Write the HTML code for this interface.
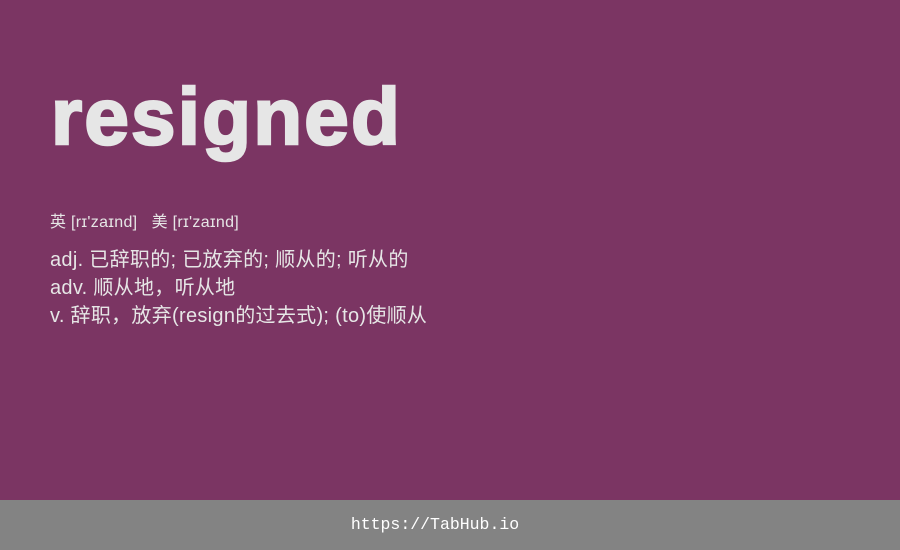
<!DOCTYPE html>
<html><head><meta charset="utf-8"><style>
body{margin:0;width:900px;height:550px;background:#7b3563;position:relative;overflow:hidden;font-family:"Liberation Sans","Noto Sans CJK SC",sans-serif;color:#e6e6e6}
.w{position:absolute;left:51px;top:67px;font-size:80px;font-weight:bold;letter-spacing:2.2px;line-height:100px;-webkit-text-stroke:2.5px #e6e6e6}
.p{position:absolute;left:50px;top:212px;font-size:16px;line-height:22px;letter-spacing:0.3px}
.d{position:absolute;left:50px;top:246px;font-size:20px;line-height:28px;letter-spacing:0.3px}
.f{position:absolute;left:0;top:500px;width:870px;height:50px;background:#838383;color:#fff;font-family:"Liberation Mono",monospace;font-size:16.5px;line-height:50px;text-align:center;padding-right:30px}
</style></head><body>
<div class="w">resigned</div>
<div class="p">英 [rɪ'zaɪnd]&nbsp;&nbsp;&nbsp;美 [rɪ'zaɪnd]</div>
<div class="d">adj. 已辞职的; 已放弃的; 顺从的; 听从的<br>adv. 顺从地，听从地<br>v. 辞职，放弃(resign的过去式); (to)使顺从</div>
<div class="f">https://TabHub.io</div>
</body></html>
